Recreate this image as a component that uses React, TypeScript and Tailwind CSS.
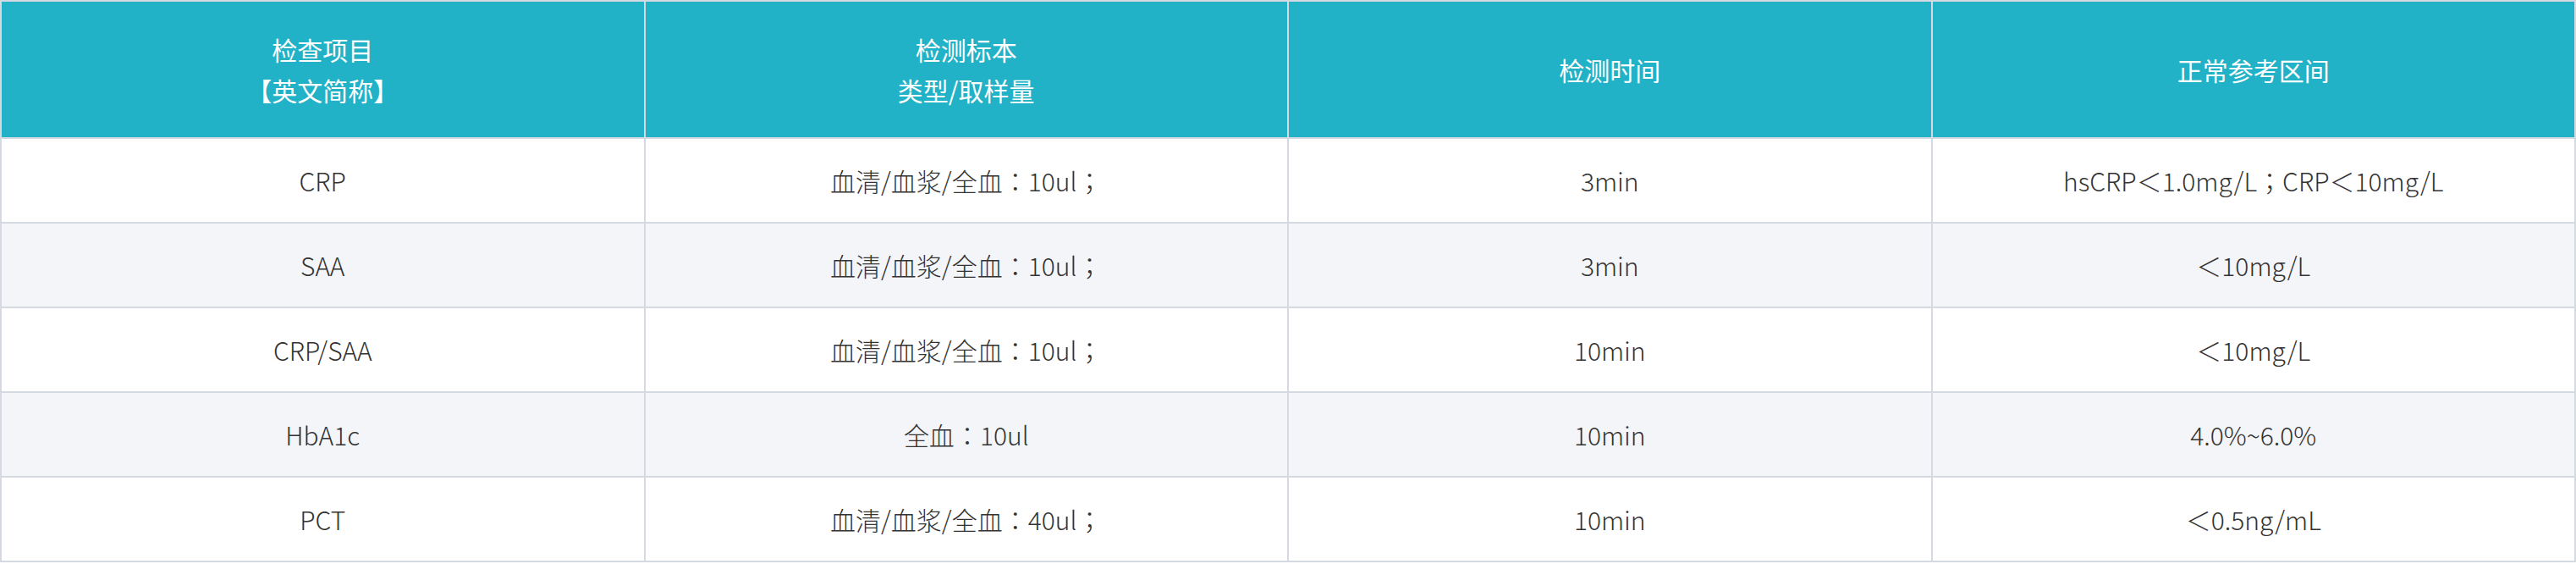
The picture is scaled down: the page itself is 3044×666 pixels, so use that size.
import React from "react";

const headers: string[][] = [
  ["检查项目", "【英文简称】"],
  ["检测标本", "类型/取样量"],
  ["检测时间"],
  ["正常参考区间"],
];

const rows: string[][] = [
  ["CRP", "血清/血浆/全血：10ul；", "3min", "hsCRP＜1.0mg/L；CRP＜10mg/L"],
  ["SAA", "血清/血浆/全血：10ul；", "3min", "＜10mg/L"],
  ["CRP/SAA", "血清/血浆/全血：10ul；", "10min", "＜10mg/L"],
  ["HbA1c", "全血：10ul", "10min", "4.0%~6.0%"],
  ["PCT", "血清/血浆/全血：40ul；", "10min", "＜0.5ng/mL"],
];

// full-width punctuation is drawn centred, as in the reference
const Cell = ({ text }: { text: string }) => (
  <>
    {text.split(/([：；])/).map((part, i) =>
      part === "：" || part === "；" ? (
        <span key={i} className="font-['Noto_Sans_CJK_TC']">
          {part}
        </span>
      ) : (
        <span key={i}>{part}</span>
      )
    )}
  </>
);

export default function App() {
  return (
    <div className="w-full bg-white font-['Noto_Sans_CJK_SC',sans-serif]">
      <div className="grid grid-cols-4 border-l-2 border-t-2 border-[#d5d9e2]">
        {headers.map((lines, i) => (
          <div
            key={i}
            className="flex h-[162px] flex-col items-center justify-center border-b-2 border-r-2 border-[#d5d9e2] bg-[#21b2c7] text-[30px] leading-[48px] text-white"
          >
            {lines.map((l) => (
              <span key={l}>{l}</span>
            ))}
          </div>
        ))}
        {rows.map((row, r) =>
          row.map((cell, c) => (
            <div
              key={`${r}-${c}`}
              className={`flex h-[100px] items-center justify-center border-b-2 border-r-2 border-[#d5d9e2] text-[30px] font-light text-[#333333] ${
                r % 2 === 1 ? "bg-[#f4f5f9]" : "bg-white"
              }`}
            >
              <Cell text={cell} />
            </div>
          ))
        )}
      </div>
    </div>
  );
}
